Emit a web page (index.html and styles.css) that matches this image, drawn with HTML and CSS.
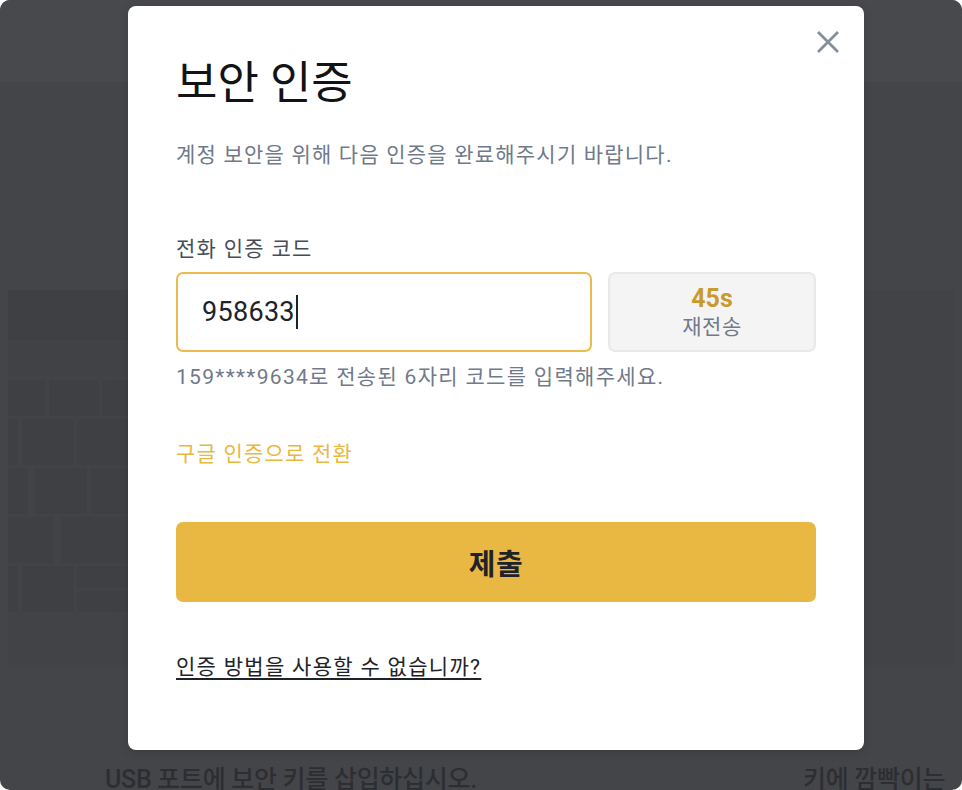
FILE: index.html
```html
<!DOCTYPE html>
<html lang="ko">
<head>
<meta charset="utf-8">
<title>보안 인증</title>
<link rel="stylesheet" href="styles.css">
</head>
<body>
<div class="window">
  <div class="topbar"></div>
  <div class="hero">
    <svg class="bricks" width="120" height="375" viewBox="0 0 120 375" aria-hidden="true">
      <rect x="0" y="0" width="120" height="50" class="b1"/>
      <rect x="0" y="52" width="120" height="33" class="b2"/>
      <rect x="0" y="90" width="38" height="36" class="b1"/>
      <rect x="41" y="90" width="50" height="36" class="b1"/>
      <rect x="94" y="90" width="26" height="36" class="b1"/>
      <rect x="0" y="129" width="10" height="46" class="b1"/>
      <rect x="14" y="129" width="52" height="46" class="b1"/>
      <rect x="69" y="129" width="51" height="46" class="b1"/>
      <rect x="0" y="178" width="20" height="46" class="b1"/>
      <rect x="27" y="178" width="52" height="46" class="b1"/>
      <rect x="82" y="178" width="38" height="46" class="b1"/>
      <rect x="0" y="227" width="46" height="46" class="b1"/>
      <rect x="53" y="227" width="67" height="46" class="b1"/>
      <rect x="0" y="276" width="10" height="46" class="b1"/>
      <rect x="14" y="276" width="52" height="46" class="b1"/>
      <rect x="69" y="276" width="51" height="22" class="b1"/>
      <rect x="69" y="301" width="51" height="21" class="b1"/>
    </svg>
  </div>
  <div class="bottom-row">
    <span>USB 포트에 보안 키를 삽입하십시오.</span>
    <span>키에 깜빡이는</span>
  </div>

  <div class="modal" role="dialog" aria-labelledby="mtitle">
    <button class="close" aria-label="닫기">
      <svg width="24" height="24" viewBox="0 0 24 24"><path d="M2 2 L22 22 M22 2 L2 22" stroke="#848e9c" stroke-width="2.8" fill="none"/></svg>
    </button>
    <h1 class="title" id="mtitle">보안 인증</h1>
    <p class="subtitle">계정 보안을 위해 다음 인증을 완료해주시기 바랍니다.</p>
    <div class="label">전화 인증 코드</div>
    <div class="row">
      <div class="input" role="textbox"><span>958633</span><span class="caret"></span></div>
      <div class="resend">
        <span class="timer">45s</span>
        <span class="resend-label">재전송</span>
      </div>
    </div>
    <p class="hint">159****9634로 전송된 6자리 코드를 입력해주세요.</p>
    <div class="switch">구글 인증으로 전환</div>
    <button class="submit">제출</button>
    <div class="help"><a href="#">인증 방법을 사용할 수 없습니까?</a></div>
  </div>
</div>
</body>
</html>
```
FILE: styles.css
```css
html, body {
  margin: 0;
  padding: 0;
  background: #ffffff;
}
body {
  font-family: Roboto, "Noto Sans CJK KR", sans-serif;
}
.window {
  position: relative;
  height: 790px;
  overflow: hidden;
  border-radius: 10px;
  background: #444549;
}
.topbar {
  height: 82px;
  background: #48494d;
}
.hero {
  margin: 208px 8px 0;
  height: 375px;
  background: #424347;
}
.bricks {
  display: block;
}
.bricks .b1 { fill: #3f4044; }
.bricks .b2 { fill: #414246; }
.bottom-row {
  display: grid;
  grid-template-columns: 698px auto;
  padding-left: 105px;
  margin-top: 99px;
  font-size: 25px;
  line-height: 32px;
  font-weight: 500;
  letter-spacing: -0.3px;
  color: #2d2e32;
  white-space: nowrap;
}
.modal {
  position: absolute;
  left: 128px;
  top: 6px;
  width: 736px;
  height: 744px;
  box-sizing: border-box;
  padding: 50px 48px 0;
  background: #ffffff;
  border-radius: 8px;
  box-shadow: 0 2px 10px rgba(0, 0, 0, 0.15);
}
.close {
  position: absolute;
  top: 24px;
  right: 24px;
  width: 24px;
  height: 24px;
  padding: 0;
  border: 0;
  background: none;
}
.close svg { display: block; }
.title {
  margin: 0;
  font-size: 45px;
  line-height: 56px;
  font-weight: 400;
  color: #111316;
}
.subtitle {
  margin: 29px 0 0;
  font-size: 21px;
  line-height: 28px;
  letter-spacing: 1.2px;
  color: #707a8a;
}
.label {
  margin-top: 66px;
  font-size: 21px;
  line-height: 28px;
  letter-spacing: 1.3px;
  color: #474d57;
}
.row {
  display: flex;
  gap: 16px;
  margin-top: 9px;
  height: 80px;
}
.input {
  flex: 1;
  display: flex;
  align-items: center;
  box-sizing: border-box;
  padding-left: 24px;
  border: 2px solid #e9bc4d;
  border-radius: 7px;
  font-size: 27px;
  letter-spacing: 0.3px;
  color: #1e2329;
}
.caret {
  width: 2px;
  height: 34px;
  margin-left: 1px;
  background: #1e2329;
}
.resend {
  width: 208px;
  box-sizing: border-box;
  display: flex;
  flex-direction: column;
  align-items: center;
  justify-content: center;
  padding-top: 2px;
  background: #f4f4f4;
  border: 2px solid #e9e9e9;
  border-radius: 7px;
}
.timer {
  font-size: 25px;
  line-height: 28px;
  font-weight: 700;
  color: #c99a2e;
}
.resend-label {
  font-size: 21px;
  line-height: 28px;
  letter-spacing: 0.5px;
  color: #707a8a;
}
.hint {
  margin: 11px 0 0;
  font-size: 21px;
  line-height: 28px;
  letter-spacing: 1.3px;
  color: #707a8a;
}
.switch {
  margin-top: 49px;
  font-size: 21px;
  line-height: 28px;
  letter-spacing: 1.2px;
  color: #e9b83f;
}
.submit {
  display: block;
  width: 100%;
  height: 80px;
  margin-top: 54px;
  border: 0;
  border-radius: 7px;
  background: #e8b842;
  font-family: Roboto, "Noto Sans CJK KR", sans-serif;
  font-size: 29px;
  font-weight: 700;
  letter-spacing: 0.5px;
  color: #1e2329;
}
.help {
  margin-top: 51px;
  font-size: 21px;
  line-height: 28px;
  letter-spacing: 1.3px;
}
.help a {
  color: #1e2329;
  text-decoration: underline;
  text-decoration-thickness: 2px;
  text-underline-offset: 4px;
}
```
